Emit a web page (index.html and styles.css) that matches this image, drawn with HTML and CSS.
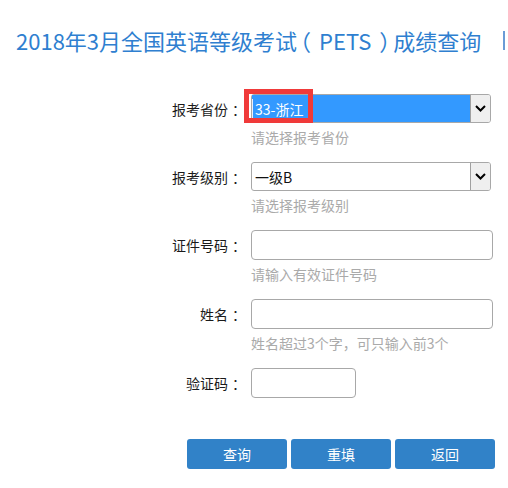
FILE: index.html
```html
<!DOCTYPE html>
<html lang="zh-CN">
<head>
<meta charset="utf-8">
<title>PETS成绩查询</title>
<link rel="stylesheet" href="styles.css">
</head>
<body>
<div class="page">
  <header class="head">
    <h1 class="title">2018年3月全国英语等级考试<span class="lp">（</span>PETS<span class="rp">）</span>成绩查询</h1>
    <span class="sep"></span>
  </header>
  <form class="form">
    <div class="field">
      <div class="row">
        <label class="lbl">报考省份<span class="colon">：</span></label>
        <div class="select focused">
          <span class="val"><span class="caret"></span>33-浙江</span>
          <span class="drop"><svg width="11" height="7" viewBox="0 0 11 7"><path d="M1 1 L5.5 5.5 L10 1" fill="none" stroke="#000" stroke-width="2"/></svg></span>
          <span class="mark"></span>
        </div>
      </div>
      <div class="hint">请选择报考省份</div>
    </div>
    <div class="field">
      <div class="row">
        <label class="lbl">报考级别<span class="colon">：</span></label>
        <div class="select">
          <span class="val">一级B</span>
          <span class="drop"><svg width="11" height="7" viewBox="0 0 11 7"><path d="M1 1 L5.5 5.5 L10 1" fill="none" stroke="#000" stroke-width="2"/></svg></span>
        </div>
      </div>
      <div class="hint">请选择报考级别</div>
    </div>
    <div class="field">
      <div class="row">
        <label class="lbl">证件号码<span class="colon">：</span></label>
        <input class="inp" type="text">
      </div>
      <div class="hint">请输入有效证件号码</div>
    </div>
    <div class="field">
      <div class="row">
        <label class="lbl">姓名<span class="colon">：</span></label>
        <input class="inp" type="text">
      </div>
      <div class="hint">姓名超过3个字，可只输入前3个</div>
    </div>
    <div class="field">
      <div class="row">
        <label class="lbl">验证码<span class="colon">：</span></label>
        <input class="inp code" type="text">
      </div>
    </div>
    <div class="actions">
      <button type="button" class="btn">查询</button>
      <button type="button" class="btn">重填</button>
      <button type="button" class="btn">返回</button>
    </div>
  </form>
</div>
</body>
</html>
```

FILE: styles.css
```css
html, body {
  margin: 0;
  padding: 0;
  background: #fff;
}
body {
  font-family: "Noto Sans CJK SC", "Microsoft YaHei", sans-serif;
  font-size: 14px;
  color: #333;
}
.page {
  width: 508px;
  overflow: hidden;
}
.head {
  display: flex;
  align-items: center;
  padding-top: 24px;
}
.title {
  margin: 0 0 0 16px;
  font-size: 22px;
  line-height: 32px;
  font-weight: normal;
  color: #2f7fd0;
  white-space: nowrap;
}
.lp,
.rp {
  font-feature-settings: "halt" 1;
}
.lp {
  margin-left: 3px;
  margin-right: 8px;
}
.rp {
  margin-left: 8px;
  margin-right: 3px;
}
.sep {
  margin-left: auto;
  margin-right: 3px;
  width: 2px;
  height: 19px;
  background: #6a9bd6;
}
.form {
  padding-top: 38px;
}
.field {
  margin-bottom: 15px;
}
.row {
  display: flex;
  align-items: center;
}
.lbl {
  width: 242px;
  margin-right: 9px;
  text-align: right;
  color: #1a1a1a;
  line-height: 20px;
  white-space: nowrap;
}
.colon {
  padding-left: 4px;
  margin-right: -4px;
}
.select {
  position: relative;
  display: flex;
  width: 240px;
  height: 29px;
  box-sizing: border-box;
  border: 1px solid #a8a8a8;
  border-radius: 3px;
  background: #fff;
}
.val {
  flex: 1;
  display: flex;
  align-items: center;
  padding-left: 3px;
  color: #111;
  line-height: 20px;
}
.focused .val {
  background: #3399ff;
  color: #fff;
  padding-left: 0;
}
.caret {
  width: 1px;
  height: 19px;
  margin-right: 2px;
  background: #e8f0ff;
}
.drop {
  width: 19px;
  display: flex;
  align-items: center;
  justify-content: center;
  background: #efefef;
  border-left: 1px solid #a0a0a0;
  border-radius: 0 2px 2px 0;
}
.mark {
  position: absolute;
  left: -8px;
  top: -6px;
  width: 69px;
  height: 34px;
  box-sizing: border-box;
  border: 5px solid #f03a3a;
}
.hint {
  margin: 4px 0 0 251px;
  line-height: 20px;
  color: #aaa;
  white-space: nowrap;
}
.inp {
  width: 242px;
  height: 30px;
  box-sizing: border-box;
  border: 1px solid #a8a8a8;
  border-radius: 4px;
  padding: 0 4px;
  margin: 0;
  font: inherit;
  outline: none;
}
.inp.code {
  width: 105px;
}
.actions {
  display: flex;
  gap: 4px;
  padding-left: 187px;
  margin-top: 41px;
}
.btn {
  width: 100px;
  height: 30px;
  border: 0;
  border-radius: 3px;
  background: #3182c8;
  color: #fff;
  font: inherit;
  font-size: 14px;
  padding: 0;
  cursor: pointer;
}
```
